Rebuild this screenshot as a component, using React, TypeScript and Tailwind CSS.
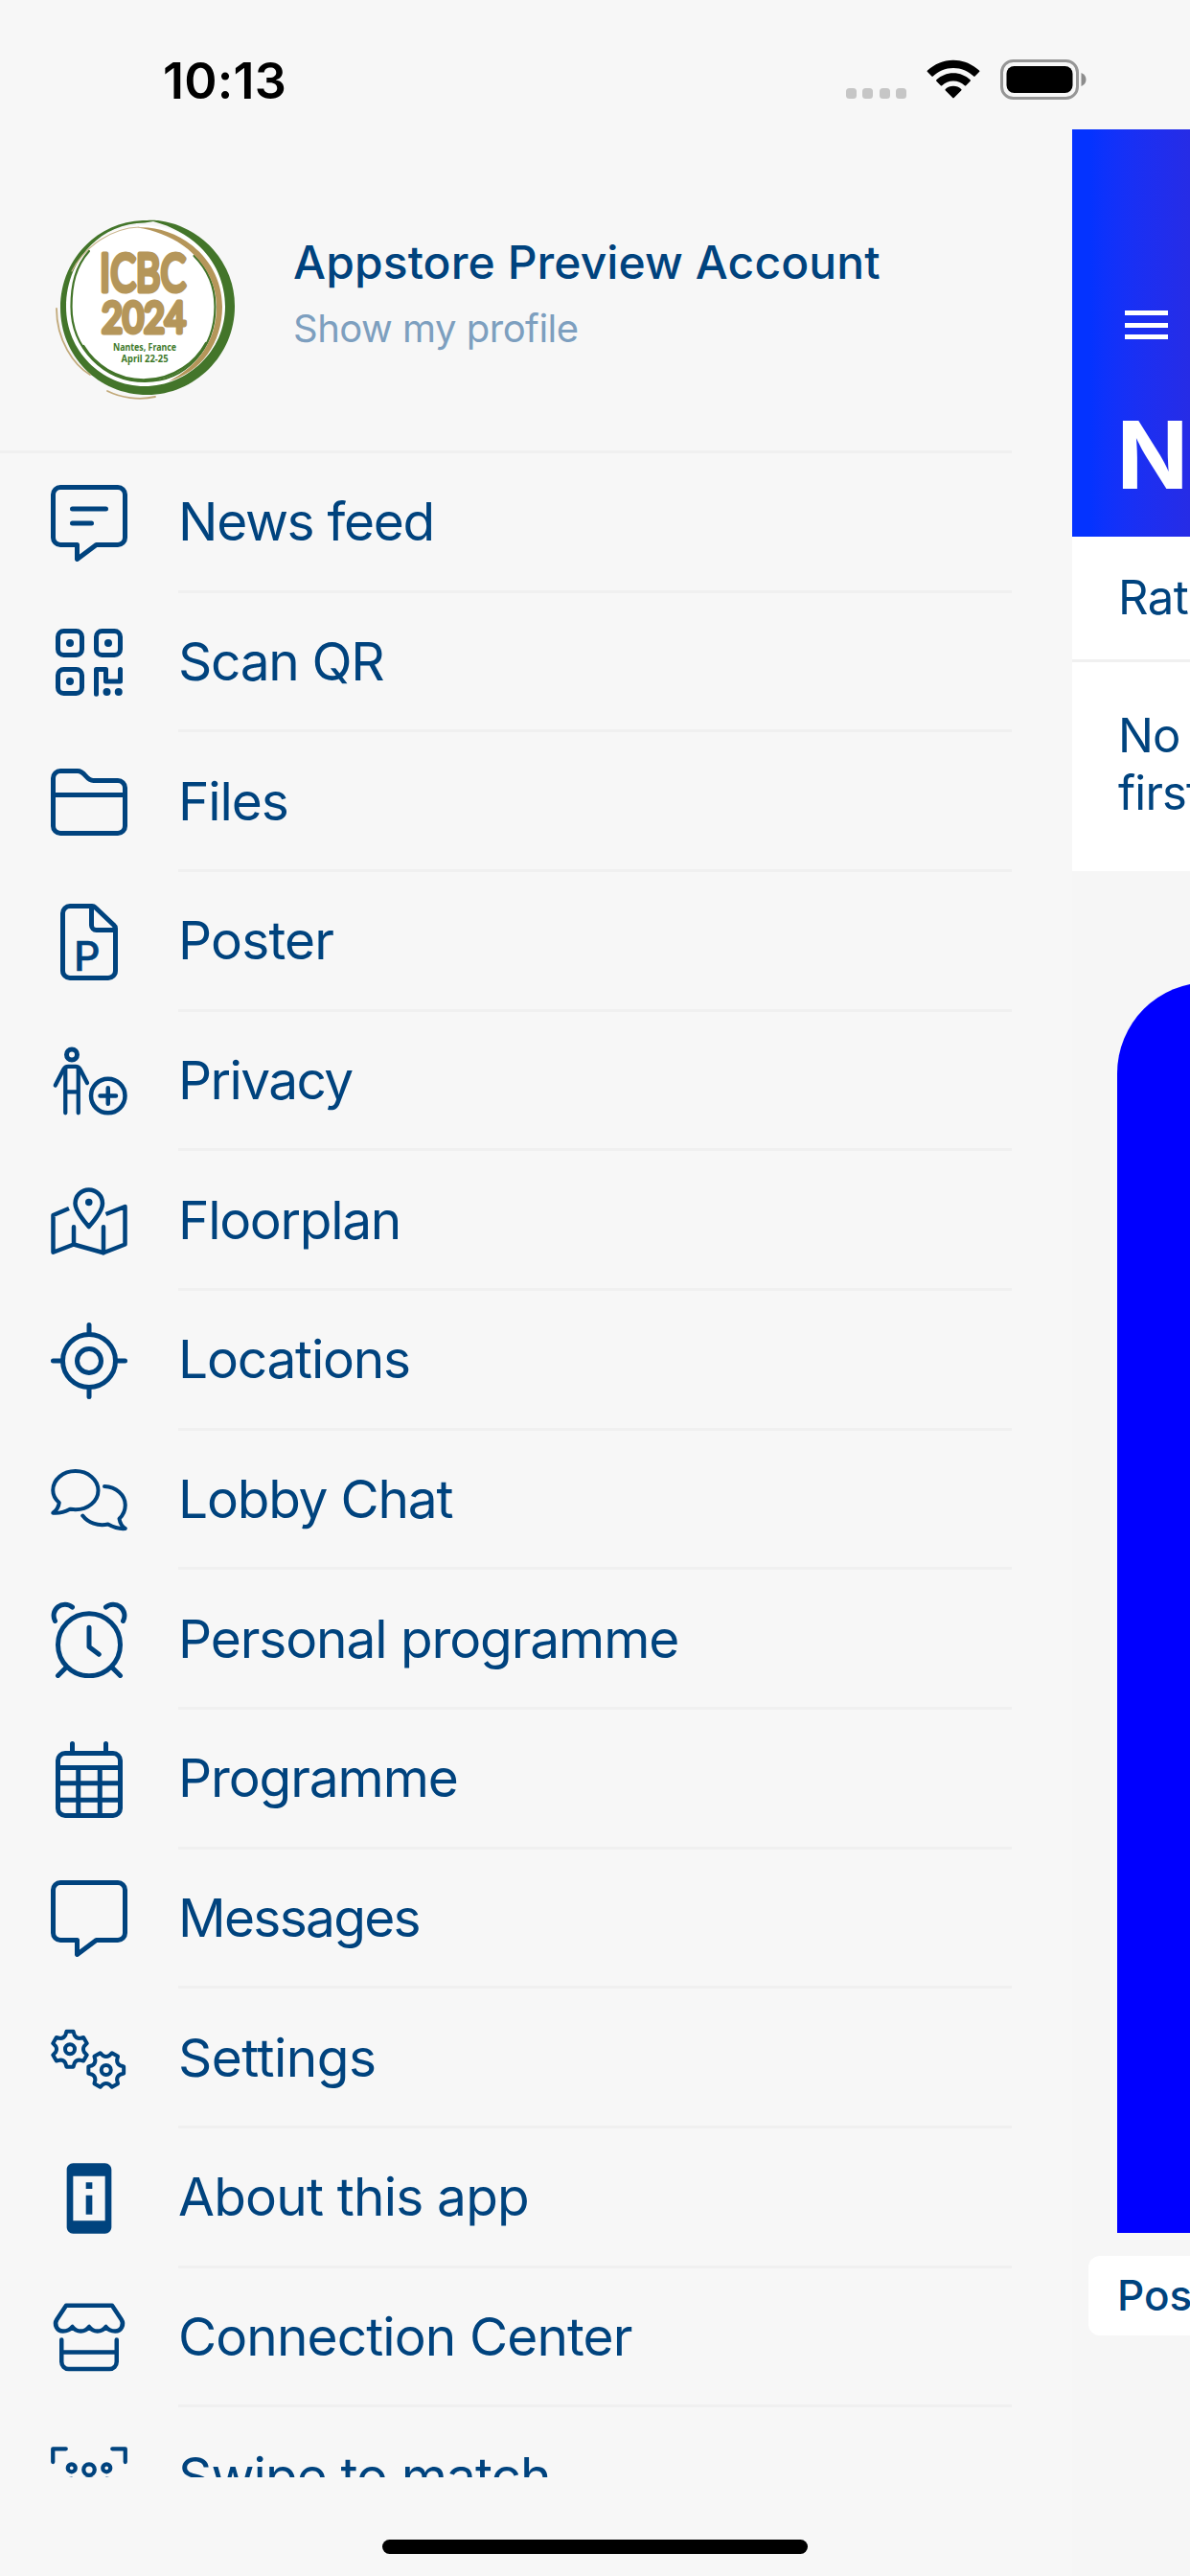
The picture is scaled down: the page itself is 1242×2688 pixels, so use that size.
import React from 'react';
import { MdPermDeviceInformation } from 'react-icons/md';

function Glyph({ children, weight = 2 }: { children: React.ReactNode; weight?: number }) {
  return (
    <svg
      viewBox="0 0 32 32"
      className="size-20"
      fill="none"
      stroke="currentColor"
      strokeWidth={weight}
      strokeLinecap="round"
      strokeLinejoin="round"
    >
      {children}
    </svg>
  );
}

const BUBBLE = 'M4 1h24a3 3 0 0 1 3 3v18a3 3 0 0 1-3 3h-9l-8 6v-6H4a3 3 0 0 1-3-3V4a3 3 0 0 1 3-3z';

// Six-toothed cog, rot is the angle of the first tooth in degrees
function gearPath(cx: number, cy: number, rot: number) {
  const at = (r: number, deg: number) => {
    const a = ((deg + rot) * Math.PI) / 180;
    return `${(cx + r * Math.cos(a)).toFixed(2)} ${(cy + r * Math.sin(a)).toFixed(2)}`;
  };
  let d = '';
  for (let i = 0; i < 6; i++) {
    const t = i * 60;
    d += `${i === 0 ? 'M' : 'L'}${at(6.1, t - 18)}L${at(7.5, t - 11)}L${at(7.5, t + 11)}L${at(6.1, t + 18)}Q${at(5.2, t + 30)} ${at(6.1, t + 42)}`;
  }
  return d + 'Z';
}

const NewsIcon = () => (
  <Glyph>
    <path d={BUBBLE} />
    <path d="M9 10h14M9 16h8" />
  </Glyph>
);

const QrIcon = () => (
  <Glyph>
    <rect x="3" y="3" width="10" height="10" rx="2.4" />
    <rect x="19" y="3" width="10" height="10" rx="2.4" />
    <rect x="3" y="19" width="10" height="10" rx="2.4" />
    <path d="M19 29.3V19h4v5h6v-5" />
    <g fill="currentColor" stroke="none">
      <circle cx="8" cy="8" r="1.6" />
      <circle cx="24" cy="8" r="1.6" />
      <circle cx="8" cy="24" r="1.6" />
      <circle cx="23.4" cy="28.4" r="1.6" />
      <circle cx="28.3" cy="28.4" r="1.6" />
    </g>
  </Glyph>
);

const FilesIcon = () => (
  <Glyph>
    <path d="M1 6a3 3 0 0 1 3-3h7.2c3.2 0 3.4 4 6.6 4H28a3 3 0 0 1 3 3v16a3 3 0 0 1-3 3H4a3 3 0 0 1-3-3z" />
    <path d="M1 13h30" />
  </Glyph>
);

const PosterIcon = () => (
  <Glyph>
    <path d="M8 1h9.2c.5 0 1 .2 1.4.6l7.6 7.2c.5.4.8 1 .8 1.6V28a3 3 0 0 1-3 3H8a3 3 0 0 1-3-3V4a3 3 0 0 1 3-3z" />
    <path d="M17 1.2V9a2 2 0 0 0 2 2h8" />
    <text x="9.6" y="27.8" fontSize="17.2" fontWeight="500" fill="currentColor" strokeWidth="0.2">
      P
    </text>
  </Glyph>
);

const PrivacyIcon = () => (
  <Glyph>
    <circle cx="8.8" cy="5" r="2.2" />
    <path d="M1.9 17.8l3.4-6.6c.4-.8 1.1-1.3 2-1.3h3c.9 0 1.600.5 2 1.300l2.900 5.600" strokeWidth="1.700" />
    <path d="M6.100 11v18.300M11.500 11v18.300M6.100 20.500h5.400" strokeWidth="1.700" />
    <circle cx="23.900" cy="22.200" r="7.100" strokeWidth="1.800" />
    <path d="M20.600 22.200h6.600M23.900 18.900v6.600" strokeWidth="1.800" />
  </Glyph>
);

const FloorplanIcon = () => (
  <Glyph weight={1.8}>
    <path d="M15.900 18.400C12 14 10.200 11.200 10.200 8.700a5.700 5.700 0 0 1 11.400 0c0 2.500-1.800 5.300-5.700 9.700z" />
    <circle cx="15.900" cy="8.200" r="1.500" fill="currentColor" stroke="none" />
    <path d="M7.600 10.800L1 13.600v15.500l8.600-3.300L22 29.300l9-3.500V10l-8 3.200" strokeLinecap="butt" />
    <path d="M9.600 18.500v7.300M22 18.500v10.800" />
  </Glyph>
);

const LocationsIcon = () => (
  <Glyph>
    <circle cx="16" cy="16" r="11" />
    <circle cx="16" cy="16" r="5" />
    <path d="M16 1v4M16 27v4M1 16h4M27 16h4" />
  </Glyph>
);

const LobbyIcon = () => (
  <Glyph weight={1.6}>
    <path d="M3.500 17.200C1.900 15.800.9 14 .9 12 .9 7.600 5.100 4 10.300 4s9.500 3.600 9.500 8.100-4.300 8-9.500 8c-.8 0-1.500-.1-2.300-.2-2.400 1.300-5 1.800-7.100 1.600C2.300 20.500 3.300 19 3.500 17.200z" />
    <path d="M22.400 10.400c4.900.2 8.700 3.600 8.700 7.800 0 2.200-.9 4.200-2.500 5.700.3 1.800 1.100 3.200 2.500 4.100-2.600.3-5-.6-7.200-1.800-4.300.9-8.300-.6-10.600-3.600" />
  </Glyph>
);

const AlarmIcon = () => (
  <Glyph>
    <circle cx="16" cy="18.100" r="13" />
    <path d="M16 10.900V19l4.100 3.100M6.500 27.500L3 31M25.500 27.500L29 31" />
    <path d="M1.800 8.200A4.700 4.700 0 0 1 9 2.400M30.200 8.200A4.700 4.700 0 0 0 23 2.400" />
  </Glyph>
);

const CalendarIcon = () => (
  <Glyph>
    <rect x="3" y="5" width="26" height="26" rx="3" />
    <path d="M9 1v4M23 1v4" />
    <path d="M3 11h26M3 17.500h26M3 24.500h26M11.500 11v20M20.500 11v20" />
  </Glyph>
);

const MessagesIcon = () => (
  <Glyph>
    <path d={BUBBLE} />
  </Glyph>
);

const SettingsIcon = () => (
  <Glyph weight={1.6}>
    <path d={gearPath(8, 12.1, -90)} />
    <circle cx="8" cy="12.100" r="2" />
    <path d={gearPath(23.1, 20.8, 0)} />
    <circle cx="23.100" cy="20.800" r="2" />
  </Glyph>
);

const StoreIcon = () => (
  <Glyph weight={1.8}>
    <path d="M6.400 2.700h19.200l3.900 5.900c1.300 2-.1 4.800-2.600 4.800-1.600 0-2.900-.5-3.900-1.800-.9 1.200-2 1.800-3.500 1.800s-2.600-.6-3.500-1.800c-.9 1.200-2 1.800-3.500 1.800s-2.600-.6-3.500-1.800c-1 1.300-2.300 1.800-3.900 1.800-2.500 0-3.900-2.800-2.600-4.800z" />
    <path d="M4.500 17v9.200a3 3 0 0 0 3 3h17a3 3 0 0 0 3-3V17M4.500 22.200h23" />
  </Glyph>
);

const SwipeIcon = () => (
  <Glyph weight={1.7}>
    <path d="M.9 9.600V4.100h5.400M31.100 9.600V4.100h-5.400M.9 22.400v5.500h5.400M31.100 22.400v5.500h-5.400" />
    <circle cx="8.700" cy="12.100" r="1.600" />
    <circle cx="16" cy="12.800" r="2.300" />
    <circle cx="23.300" cy="12.100" r="1.600" />
    <path d="M11.500 22v-1a4.500 4.500 0 0 1 9 0v1M6 20v-1a2.700 2.700 0 0 1 3-2.300M26 20v-1a2.700 2.700 0 0 0-3-2.300" />
  </Glyph>
);

const menu = [
  { label: 'News feed', icon: <NewsIcon />, spacing: 'tracking-[-1.3px]' },
  { label: 'Scan QR', icon: <QrIcon />, spacing: 'tracking-[-1.3px]' },
  { label: 'Files', icon: <FilesIcon />, spacing: 'tracking-[-1.1px]' },
  { label: 'Poster', icon: <PosterIcon />, spacing: 'tracking-[-0.8px]' },
  { label: 'Privacy', icon: <PrivacyIcon />, spacing: 'tracking-[-1.6px]' },
  { label: 'Floorplan', icon: <FloorplanIcon />, spacing: 'tracking-[-1.3px]' },
  { label: 'Locations', icon: <LocationsIcon />, spacing: 'tracking-[-1.2px]' },
  { label: 'Lobby Chat', icon: <LobbyIcon />, spacing: 'tracking-[-1.2px]' },
  { label: 'Personal programme', icon: <AlarmIcon />, spacing: 'tracking-[-1.1px]' },
  { label: 'Programme', icon: <CalendarIcon />, spacing: 'tracking-[-1.1px]' },
  { label: 'Messages', icon: <MessagesIcon />, spacing: 'tracking-[-1.7px]' },
  { label: 'Settings', icon: <SettingsIcon />, spacing: 'tracking-[-0.5px]' },
  { label: 'About this app', icon: <MdPermDeviceInformation className="size-20" />, spacing: 'tracking-[-0.8px]' },
  { label: 'Connection Center', icon: <StoreIcon />, spacing: 'tracking-[-0.9px]' },
  { label: 'Swipe to match', icon: <SwipeIcon />, spacing: 'tracking-[-0.9px]' },
];

function StatusBar() {
  return (
    <header className="flex h-[135px] shrink-0 items-start justify-between pr-[108px] pl-[170px] text-black">
      <span className="mt-[53px] text-[52px] leading-[63px] font-semibold tracking-[0.2px]">10:13</span>
      <div className="mt-[62px] flex items-start">
        <div className="mt-[30px] mr-[21px] flex gap-[6.300px]">
          {[0, 1, 2, 3].map((n) => (
            <span key={n} className="size-[11px] rounded-[3.500px] bg-[#c6c6c6]" />
          ))}
        </div>
        <svg viewBox="0 0 56 41" className="mr-[21px] h-[41px] w-[56px]" fill="currentColor">
          <path d="M28 .7C38.500.7 48 5 55 11.600a1 1 0 0 1 0 1.500l-4.400 4.500a1 1 0 0 1-1.400 0C43.600 12.200 36.200 9 28 9S12.400 12.200 6.800 17.600a1 1 0 0 1-1.400 0L1 13.100a1 1 0 0 1 0-1.500C8 5 17.500.7 28 .7z" />
          <path d="M28 14.300c6.800 0 13 2.700 17.600 7a1 1 0 0 1 0 1.500l-4.400 4.400a1 1 0 0 1-1.400 0C36.700 24.300 32.500 22.500 28 22.500s-8.700 1.800-11.800 4.700a1 1 0 0 1-1.400 0l-4.400-4.400a1 1 0 0 1 0-1.500c4.600-4.300 10.800-7 17.600-7z" />
          <path d="M28 27.700c3.100 0 6 1.200 8.200 3.200a1 1 0 0 1 0 1.500l-7.500 7.700a1 1 0 0 1-1.400 0l-7.500-7.700a1 1 0 0 1 0-1.500c2.200-2 5.100-3.200 8.200-3.200z" />
        </svg>
        <svg viewBox="0 0 90 42" className="h-[42px] w-[90px]">
          <rect x="1.500" y="1.500" width="79" height="39" rx="12" fill="none" stroke="#969696" strokeWidth="3" />
          <rect x="6.500" y="7" width="69" height="28" rx="8" fill="#000" />
          <path d="M84.500 14c3.200 1.300 5 4 5 7s-1.800 5.700-5 7z" fill="#8c8c8c" />
        </svg>
      </div>
    </header>
  );
}

function EventLogo() {
  return (
    <svg viewBox="0 0 190 190" className="size-[190px]" fill="none" strokeLinecap="round">
      <circle cx="94" cy="93" r="86" fill="#fff" />
      {/* green brush ring, thicker to the right and the bottom */}
      <path
        fillRule="evenodd"
        fill="#43752a"
        d="M108 2a92 90 0 0 1 80 90c0 51-42 92-91 92C45 184 6 143 6 93 6 44 43 4 92 2c5 0 8-.8 16 0zM94 4.500C46 5 12 45 12 92c0 46 37 83 82 83s84-37 84-83C178 55 155 17 103 3z"
      />
      <path
        d="M36 34C22 50 17.500 68 17.500 92c0 43 34 78 77 78s73-35 73-78c0-22-8-39-22-53"
        stroke="#43752a"
        strokeWidth="2.200"
      />
      <path d="M30 133a74 74 0 0 0 128-3" stroke="#43752a" strokeWidth="2.500" />
      <path d="M86 9.500C130 7 175 42 175 92c0 38-22 68-56 78 31-16 50-43 50-78 0-42-36-76-83-82.500z" fill="#b5965a" />
      <path d="M88 9C60 10 32 28 18 55" stroke="#c9b58c" strokeWidth="1.200" />
      <path d="M2 94C2 127 20 153 37 163" stroke="#c2aa7b" strokeWidth="1.800" />
      <path d="M55 180C69 187 88 190 105 186" stroke="#c2aa7b" strokeWidth="1.800" />
      <g fill="#b5965a" stroke="#b5965a" strokeWidth="5" strokeLinejoin="round" className="font-[Lato,sans-serif]">
        <text x="47" y="75.500" fontSize="54" textLength="90" lengthAdjust="spacingAndGlyphs">
          ICBC
        </text>
        <text x="49" y="119" fontSize="45" textLength="88" lengthAdjust="spacingAndGlyphs">
          2024
        </text>
      </g>
      <g fill="#3f7a2b" className="font-['Noto_Sans',sans-serif] font-bold">
        <text x="61" y="138" fontSize="10" textLength="66" lengthAdjust="spacingAndGlyphs">
          Nantes, France
        </text>
        <text x="69.500" y="149.500" fontSize="10" textLength="49" lengthAdjust="spacingAndGlyphs">
          April 22-25
        </text>
      </g>
    </svg>
  );
}

function Drawer() {
  return (
    <aside className="flex h-[2450px] w-[1119px] shrink-0 flex-col overflow-hidden">
      <div className="flex h-[338px] w-[1056px] shrink-0 items-start border-b-[3px] border-[#f0f0f0] pt-[93px] pl-[57px]">
        <EventLogo />
        <div className="ml-[59px] flex flex-col pt-[17px]">
          <span className="text-[48px] leading-[58px] font-medium tracking-[0.1px] whitespace-nowrap">
            Appstore Preview Account
          </span>
          <span className="mt-[16px] text-[40px] leading-[48px] tracking-[-0.5px] whitespace-nowrap text-[#7d9fbf]">
            Show my profile
          </span>
        </div>
      </div>
      <nav>
        {menu.map((item) => (
          <a key={item.label} className="flex h-[145.670px] w-[1056px] items-center pl-[53px]">
            {item.icon}
            <span className="ml-[53px] flex h-full flex-1 items-center border-b-[3px] border-[#f0f0f0]">
              <span className={`text-[55px] leading-[66px] whitespace-nowrap ${item.spacing}`}>{item.label}</span>
            </span>
          </a>
        ))}
      </nav>
    </aside>
  );
}

function FeedPage() {
  return (
    <main className="flex h-[2553px] min-w-0 flex-1 flex-col overflow-hidden bg-[#f6f6f6]">
      <div className="flex h-[425px] shrink-0 flex-col items-start bg-linear-to-r from-[#0433ff] from-15% to-[#262ce6] pt-[189px] pl-[54.500px]">
        <div className="flex flex-col gap-[7.500px]">
          <span className="h-[5px] w-[45px] bg-white" />
          <span className="h-[5px] w-[45px] bg-white" />
          <span className="h-[5px] w-[45px] bg-white" />
        </div>
        <h1 className="mt-[62px] -ml-[8px] text-[98px] leading-[118px] font-bold whitespace-nowrap text-white">
          News feed
        </h1>
      </div>
      <div className="flex h-[131px] w-[900px] shrink-0 items-center border-b-[3px] border-[#f0f0f0] bg-white pl-[48px] text-[49px] tracking-[-0.5px]">
        Rate
      </div>
      <div className="h-[218px] w-[900px] shrink-0 bg-white pt-[47px] pl-[48px] text-[49px] leading-[60px] tracking-[-0.8px]">
        No posts yet, be the
        <br />
        first
      </div>
      <div className="mt-[116px] ml-[47px] h-[1305px] w-[900px] shrink-0 rounded-t-[95px] bg-[#0000ff]" />
      <div className="mt-[24px] ml-[17px] flex h-[83px] w-[500px] shrink-0 items-center rounded-xl bg-white pb-[2px] pl-[30px] text-[44px] font-medium">
        Posts
      </div>
    </main>
  );
}

export default function App() {
  return (
    <div className="relative flex h-[2688px] w-[1242px] flex-col overflow-hidden bg-[#f7f7f7] font-[Inter,sans-serif] text-[#00437e]">
      <StatusBar />
      <div className="flex">
        <Drawer />
        <FeedPage />
      </div>
      {/* home indicator */}
      <div className="absolute bottom-[23px] left-[399px] h-[15px] w-[444px] rounded-full bg-black" />
    </div>
  );
}
